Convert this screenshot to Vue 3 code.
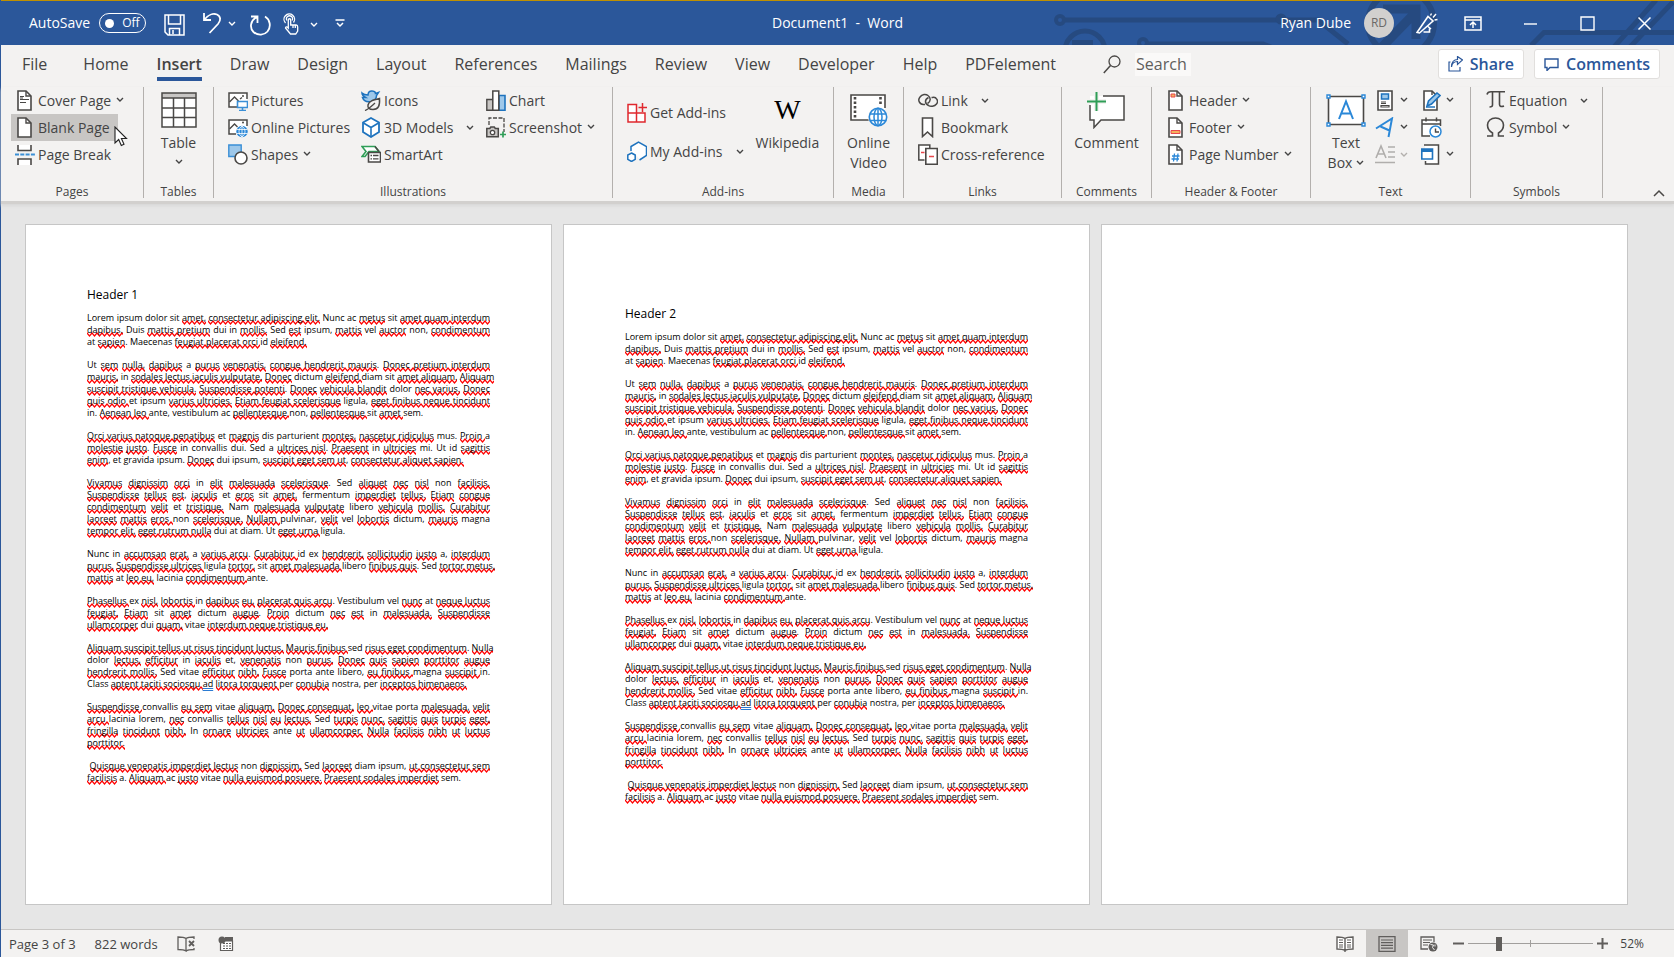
<script setup>
import { h, ref } from 'vue'

const G = '#4a4846'
const B = '#1e73be'

const icons = {
  chevron: [8, 5, '<path d="M1 1l3 3 3-3" fill="none" stroke="currentColor" stroke-width="1.4"/>'],
  cover: [20, 21, `<path d="M3 1h8l5 5v14H3z" fill="#fff" stroke="${G}" stroke-width="1.6"/><path d="M11 1v5h5" fill="none" stroke="${G}" stroke-width="1.4"/><path d="M5 6.500h4M5 9.500h9M5 12.500h6M5 8h3" stroke="${G}" stroke-width="1.2"/>`],
  blank: [20, 21, `<path d="M3 1h8l5 5v14H3z" fill="#fff" stroke="${G}" stroke-width="1.6"/><path d="M11 1v5h5" fill="none" stroke="${G}" stroke-width="1.4"/>`],
  pagebreak: [20, 21, `<path d="M3 1h13v5H3zM3 15h13v6H3z" fill="#fff"/><path d="M3 1v5.500h13V1M3 21v-6h13v6" fill="none" stroke="${G}" stroke-width="1.6"/><path d="M0 10.500h20" stroke="#3a8fd6" stroke-width="1.800" stroke-dasharray="4 1.300"/>`],
  table: [36, 36, `<path d="M1 1h34v34H1z" fill="#fff"/><path d="M1 1h34v5H1z" fill="#c8c6c4"/><path d="M1 1h34v34H1zM1 6h34M1 16h34M1 25.500h34M12.500 6v29M23.500 6v29" fill="none" stroke="${G}" stroke-width="1.500"/>`],
  pictures: [20, 21, `<path d="M1 3h18v14H1z" fill="#fff"/><path d="M9 17H1V3h18v6" fill="none" stroke="${G}" stroke-width="1.500"/><path d="M1.500 12l5-5 4 4M12 9l2-1.500" fill="none" stroke="${G}" stroke-width="1.400"/><circle cx="15" cy="6" r="1" fill="${G}"/><path d="M9.500 11.500h10v6h-10zM14.500 17.500v3M11 20.500h7" fill="#fff" stroke="#3a8fd6" stroke-width="1.600"/>`],
  online: [20, 21, `<path d="M1 3h18v14H1z" fill="#fff"/><path d="M8 17H1V3h18v6" fill="none" stroke="${G}" stroke-width="1.500"/><path d="M1.500 12l5-5 3 3" fill="none" stroke="${G}" stroke-width="1.400"/><circle cx="15" cy="5.500" r="1" fill="${G}"/><circle cx="14" cy="14.500" r="5.700" fill="#2b88d8"/><path d="M8.500 12.500h11M8.500 16.500h11M14 9v11M14 9c-4 3-4 8 0 11M14 9c4 3 4 8 0 11" fill="none" stroke="#fff" stroke-width=".8"/>`],
  shapes: [20, 21, `<path d="M.8 1h12.400v11.500H.8z" fill="#9ec8ea" stroke="#3a8fd6" stroke-width="1.400"/><circle cx="13" cy="14" r="6" fill="#fff" stroke="${G}" stroke-width="1.600"/>`],
  icons: [20, 21, `<path d="M1 3c2 2 4 2 6 2 0-3 2-4.500 4.500-4 2 .3 3 1.500 3 2.500l3-1-2 3c0 3-2 5-5 6-5 1-8-1-9-4l3 0C2 6 1 4.500 1 3z" fill="#9ec8ea" stroke="#1e73be" stroke-width="1.500"/><path d="M18.500 8.500c.5 7-1 11-6.500 11-4 0-5.500-2-5-4.500.8-4 5-5 11.500-6.500z" fill="#f3f2f1" stroke="${G}" stroke-width="1.500"/><path d="M4 20.500c3-1 6-4 10-7.500" fill="none" stroke="${G}" stroke-width="1.300"/>`],
  cube: [20, 21, '<path d="M10 1l8 4.500v9.500l-8 5-8-5V5.500z" fill="#fff" stroke="#1e73be" stroke-width="1.800"/><path d="M2.500 6l7.500 4.500L17.500 6M10 10.500V20" fill="none" stroke="#1e73be" stroke-width="1.600"/>'],
  smartart: [20, 21, `<path d="M1 2.500h13l4 5H8l-4 5H1l4-5z" fill="#fff" stroke="#2f9e57" stroke-width="1.600"/><path d="M14 2.500l4 5" stroke="${G}" stroke-width="1.400"/><path d="M7.500 8.500h12v9.500h-12z" fill="#fff" stroke="${G}" stroke-width="1.600"/><path d="M9.500 11.500h1.500M12 11.500h5.500M9.500 14.800h1.500M12 14.800h5.500" stroke="${G}" stroke-width="1.300"/>`],
  chart: [20, 21, `<path d="M.8 9.500h6v10.700h-6z" fill="#c8c6c4" stroke="${G}" stroke-width="1.400"/><path d="M13 5.500h6v14.700h-6z" fill="#9ec8ea" stroke="${B}" stroke-width="1.600"/><path d="M6.800 1h6v19.200h-6z" fill="#fff" stroke="${G}" stroke-width="1.500"/>`],
  screenshot: [20, 21, `<path d="M3 8V1h15v14" fill="none" stroke="${G}" stroke-width="1.300" stroke-dasharray="4 1.500"/><path d="M.8 11.500h3l1-1.500h3.500l1 1.500h3v8.200H.8z" fill="#c8c6c4" stroke="${G}" stroke-width="1.500"/><circle cx="6.500" cy="15.500" r="2.200" fill="#fff" stroke="${G}" stroke-width="1.300"/><path d="M17 14.500v6M14 17.500h6" stroke="#2f9e57" stroke-width="1.700"/>`],
  getaddins: [20, 21, '<path d="M1 2.500h8.500v8.500H1zM1 11h8.500v9H1zM9.500 11H18v9H9.500z" fill="#fff" stroke="#e0282e" stroke-width="1.500"/><path d="M15.500 1v9M11.500 5.500h8.500" stroke="#e0282e" stroke-width="1.500"/>'],
  myaddins: [20, 21, '<path d="M4 10V5.500L11.500 1l8 4.500v9l-6.500 4.500-3-4z" fill="#fff"/><path d="M4 10V5.500L11.500 1l8 4.500v9l-7 4.500" fill="none" stroke="#1e73be" stroke-width="1.500"/><path d="M4.500 12l3.700 2v4.300l-3.700 2.200L.8 18.300V14z" fill="#fff" stroke="#1e73be" stroke-width="1.500"/>'],
  video: [40, 34, `<path d="M2 2h34v25H2z" fill="#fff"/><path d="M21 27H2V2h34v13" fill="none" stroke="${G}" stroke-width="1.600"/><path d="M6 4v22M31.500 4v8" stroke="${G}" stroke-width="2.600" stroke-dasharray="2.500 2"/><circle cx="29" cy="24" r="10" fill="#f3f2f1"/><circle cx="29" cy="24" r="8.700" fill="#fff" stroke="#2b88d8" stroke-width="1.600"/><ellipse cx="29" cy="24" rx="4" ry="8.700" fill="none" stroke="#2b88d8" stroke-width="1.500"/><path d="M29 15v18M21 21h16M21 27.500h16" stroke="#2b88d8" stroke-width="1.500"/>`],
  link: [20, 21, `<path d="M7 14.500H5.500A4.500 4.500 0 0 1 2 7C4 4 8 4 10 5.500c3 2 3 6-.5 8" fill="none" stroke="${G}" stroke-width="1.500"/><path d="M13.500 7.500h1A4 4 0 0 1 18.500 14c-2 2.500-6 3-8 1.500-4-2-4-6 0-8" fill="none" stroke="${G}" stroke-width="1.500"/>`],
  bookmark: [20, 21, `<path d="M4.500 1h10v18.500l-5-4.500-5 4.500z" fill="#fff" stroke="${G}" stroke-width="1.600"/>`],
  crossref: [20, 21, `<path d="M.8 1h11v15H.8z" fill="#fff"/><path d="M6.500 16H.8V1h11v3" fill="none" stroke="${G}" stroke-width="1.500"/><path d="M7.800 4.500h11.500v15.700H7.800z" fill="#fff" stroke="${G}" stroke-width="1.600"/><path d="M3 8.500h3.500M11 12.500h5" stroke="#e8484d" stroke-width="1.500"/>`],
  comment: [40, 38, `<path d="M4 5h34v24H15l-7 8v-8H4z" fill="#fff"/><path d="M17 5h21v24H15l-7 7.500V29H4V14" fill="none" stroke="${G}" stroke-width="1.500"/><path d="M10.500 1v19M1 10.500h19" stroke="#f3f2f1" stroke-width="5"/><path d="M10.500 1v19M1 10.500h19" stroke="#2f9e57" stroke-width="2"/>`],
  header: [20, 21, `<path d="M3 1h8l5 5v14H3z" fill="#fff" stroke="${G}" stroke-width="1.600"/><path d="M11 1v5h5" fill="none" stroke="${G}" stroke-width="1.400"/><path d="M5 4h4v3H5z" fill="#f6b15c" stroke="#e8484d"/>`],
  footer: [20, 21, `<path d="M3 1h8l5 5v14H3z" fill="#fff" stroke="${G}" stroke-width="1.600"/><path d="M11 1v5h5" fill="none" stroke="${G}" stroke-width="1.400"/><path d="M5 13.500h9v3H5z" fill="#f6b15c" stroke="#e8484d"/>`],
  pagenum: [20, 21, `<path d="M3 1h8l5 5v14H3z" fill="#fff" stroke="${G}" stroke-width="1.600"/><path d="M11 1v5h5" fill="none" stroke="${G}" stroke-width="1.400"/><path d="M8.500 9.500l-1 8M12 9.500l-1 8M6 12h7.500M5.500 15h7.500" stroke="#2b88d8" stroke-width="1.300"/>`],
  textbox: [40, 34, `<path d="M2.500 3.500h35v28h-35z" fill="#fff" stroke="${G}" stroke-width="1.600"/><path d="M13 26l7-17.500L27 26M15.500 20.500h9" fill="none" stroke="#2b88d8" stroke-width="2"/><path d="M1 2h3v3H1zM36 2h3v3h-3zM1 30h3v3H1zM36 30h3v3h-3z" fill="#fff" stroke="#2b88d8" stroke-width="1.400"/>`],
  quickparts: [20, 21, `<path d="M3 1h14v19H3z" fill="#fff" stroke="${G}" stroke-width="1.600"/><path d="M6.500 4h7v5h-7z" fill="#9ec8ea" stroke="${B}" stroke-width="1.500"/><path d="M6 12h5M6 15.500h8v1.500H6zM6 13.500h5" stroke="${G}" stroke-width="1.200" fill="none"/>`],
  wordart: [20, 21, '<path d="M1 11.500L17 1.500L13.500 20M5.500 9.500l9 4" fill="none" stroke="#2b88d8" stroke-width="2"/>'],
  dropcap: [20, 21, '<path d="M1 14L6 2l5 12M2.800 10h6.400M13 3h7M13 8h7M13 13h7M0 18.500h20" fill="none" stroke="#b0aeac" stroke-width="1.600"/>'],
  signature: [20, 21, `<path d="M3 1h8l5 5v14H3z" fill="#fff" stroke="${G}" stroke-width="1.600"/><path d="M11 1v4" stroke="${G}" stroke-width="1.400"/><path d="M6 16l1.500-5L16 3l3 2.500-8.500 8.500z" fill="#9ec8ea" stroke="${B}" stroke-width="1.600"/><path d="M5 17h9" stroke="${B}" stroke-width="1.500"/>`],
  datetime: [21, 21, `<path d="M1 3h18v16H1z" fill="#fff"/><path d="M9 19H1V3h18.500v6M1 7h18.500M5 .5v4M15.500 .5v4" fill="none" stroke="${G}" stroke-width="1.500"/><circle cx="14.500" cy="14.500" r="5.500" fill="#fff" stroke="#2b88d8" stroke-width="1.500"/><path d="M14.500 11.500v3.500h3.500" fill="none" stroke="${G}" stroke-width="1.400"/>`],
  object: [20, 21, `<path d="M4 1h13v19H4z" fill="#fff"/><path d="M3 1h14.500v19H4.500v-3" fill="none" stroke="${G}" stroke-width="1.500"/><path d="M.8 5h10.700v10H.8z" fill="#fff" stroke="${B}" stroke-width="1.600"/><path d="M.8 6.500h10.700" stroke="${B}" stroke-width="3"/>`],
  pi: [20, 21, `<path d="M1 4.500C1.500 2 3 1.800 5 1.800h14M6.500 2v13c0 1.500-1 2-3 2M13.500 2v12.500c0 2 2 2.500 4.500 1.500" fill="none" stroke="${G}" stroke-width="1.600"/>`],
  omega: [20, 21, `<path d="M1 19h5.500v-3C3 14 1.500 11 1.500 8c0-4 3.500-7 8-7s8 3 8 7c0 3-1.500 6-5 8v3H18" fill="none" stroke="${G}" stroke-width="1.600"/>`],
  save: [21, 22, '<path d="M1 1h19v20H4l-3-3z" fill="none" stroke="#fff" stroke-width="1.500"/><path d="M4.500 1v9h12V1M5.500 21v-6.500h10V21M9 16v4" fill="none" stroke="#fff" stroke-width="1.500"/>'],
  undo: [20, 22, '<path d="M2 1v7h7M2.500 7.500C6 3 11 1 15 2.500c4 2 4 6 1 9.500l-8.500 9" fill="none" stroke="#fff" stroke-width="1.800"/>'],
  redo: [21, 22, '<path d="M1 2.500h6.500V9M7 3C0 6.500-.5 14 3.500 18c4.500 4 11 3 14-.5 4-5 2.500-12-2.500-15" fill="none" stroke="#fff" stroke-width="1.800"/>'],
  touch: [16, 22, '<path d="M2.500 10a5.300 5.300 0 1 1 8-.5M4 7.500a3 3 0 1 1 5 0" fill="none" stroke="#fff" stroke-width="1.300"/><path d="M5.300 15V7c0-1.700 2.400-1.700 2.400 0v5h5.500c1.500 0 1.500 1 1.500 2v4l-2 3H7.500l-5-6c0-1.500 1.500-1.500 2.800 0zM10 12v3M12.300 12v3" fill="none" stroke="#fff" stroke-width="1.300"/>'],
  customize: [10, 9, '<path d="M.5 1h9M2 4l3 3 3-3" fill="none" stroke="#fff" stroke-width="1.500"/>'],
  marker: [22, 21, '<path d="M1 19.500L12 3.500l5 4.500L3.500 20zM7.500 19h6v-3.500M12 13.500l3 2.500" fill="none" stroke="#fff" stroke-width="1.600"/><path d="M14.500 2.500l1-2M17 4.500l3-3.500M18.500 7l3-.5" stroke="#fff" stroke-width="1.400"/>'],
  ribbonmode: [18, 15, '<path d="M1 1h16v13H1zM1 4h16M9 12V6.500M6 9l3-3 3 3" fill="none" stroke="#fff" stroke-width="1.500"/>'],
  minimize: [15, 15, '<path d="M1 8h13" stroke="#fff" stroke-width="1.400"/>'],
  maximize: [15, 15, '<path d="M1 1h13v13H1z" fill="none" stroke="#fff" stroke-width="1.400"/>'],
  close: [15, 15, '<path d="M1.500 1.500l12 12M13.500 1.500l-12 12" stroke="#fff" stroke-width="1.500"/>'],
  search: [18, 19, `<circle cx="11.500" cy="6.500" r="5.500" fill="none" stroke="${G}" stroke-width="1.300"/><path d="M7.500 10.500L.8 18" stroke="${G}" stroke-width="1.500"/>`],
  share: [15, 16, '<path d="M2.500 6H1v9h11v-4M3.500 11c.5-4 3-5.500 6-5.500V8.500l5-4.500-5-3.500v3C6 3.500 3.500 6 3.500 11z" fill="none" stroke="#2b579a" stroke-width="1.200"/>'],
  bubble: [15, 13, '<path d="M1 1h13v8.500H6l-3 3v-3H1z" fill="none" stroke="#2b579a" stroke-width="1.400"/>'],
  collapse: [12, 8, `<path d="M1 7l5-5 5 5" fill="none" stroke="${G}" stroke-width="1.500"/>`],
  proof: [18, 16, '<path d="M9 2.500C7 1 4 1 1 1v12.500c3 0 6 0 8 1.500zM9 2.500C11 1 13 1 17 1v2M9 15c2-1.500 5-1.500 8-1.500V12" fill="none" stroke="#605e5c" stroke-width="1.300"/><path d="M12 5l5 5M17 5l-5 5" stroke="#605e5c" stroke-width="1.800"/>'],
  macro: [16, 16, '<path d="M2.500 5h12v9.500h-12z" fill="#fff" stroke="#605e5c" stroke-width="1.200"/><path d="M7 1h8v4H7z" fill="#605e5c"/><circle cx="4" cy="4" r="3.500" fill="#605e5c"/><path d="M5 7.500h9M5 10h9M5 12.500h9" stroke="#605e5c" stroke-width="1.200" stroke-dasharray="2 1"/>'],
  read: [18, 16, '<path d="M9 2.500C7 1 4 1 1 1v12c3 0 6 0 8 1.500C11 13 14 13 17 13V1c-3 0-6 0-8 1.500zM9 2v14" fill="#fff" stroke="#605e5c" stroke-width="1.400"/><path d="M3 4h4M3 6.500h4M3 9h4M11 4h4M11 6.500h4M11 9h4M3 11h4M11 11h4" stroke="#605e5c" stroke-width="1.200"/>'],
  print: [18, 16, '<path d="M1 .7h16v14.600H1z" fill="none" stroke="#605e5c" stroke-width="1.300"/><path d="M3 4h12M3 6.700h12M3 9.400h12M3 12.100h12" stroke="#605e5c" stroke-width="1.200"/>'],
  web: [18, 16, '<path d="M8 13H1V1h13v5" fill="none" stroke="#605e5c" stroke-width="1.300"/><path d="M3 4h9M3 6.500h7M3 9h5" stroke="#605e5c" stroke-width="1.200"/><circle cx="13" cy="11" r="4.500" fill="#605e5c"/><path d="M10.500 8.500l3 .5-1 2.500 2 2.500M15 8.500v2" fill="none" stroke="#f3f2f1" stroke-width="1"/>'],
  minus: [11, 11, '<path d="M0 5.500h11" stroke="#605e5c" stroke-width="2"/>'],
  plus: [11, 11, '<path d="M0 5.500h11M5.500 0v11" stroke="#605e5c" stroke-width="2"/>'],
  pointer: [14, 21, '<path d="M1 1v16l3.700-3.500L7.300 19.500l2.700-1.200-2.600-5.800h5.100z" fill="#fff" stroke="#222" stroke-width="1.100"/>']
}

const Icon = (props) => {
  const [w, ht, body] = icons[props.name]
  return h('svg', { width: w, height: ht, viewBox: `0 0 ${w} ${ht}`, 'aria-hidden': 'true', innerHTML: body })
}
Icon.props = ['name']

const tabs = ['File', 'Home', 'Insert', 'Draw', 'Design', 'Layout', 'References', 'Mailings', 'Review', 'View', 'Developer', 'Help', 'PDFelement']

const b = (icon, text, arrow = '') => ({ icon, text, arrow })
const illustrations = [
  [b('pictures', 'Pictures'), b('online', 'Online Pictures'), b('shapes', 'Shapes', 'near')],
  [b('icons', 'Icons'), b('cube', '3D Models', 'far'), b('smartart', 'SmartArt')],
  [b('chart', 'Chart'), b('screenshot', 'Screenshot', 'near')]
]
const addins = [b('getaddins', 'Get Add-ins'), b('myaddins', 'My Add-ins', 'far')]
const links = [b('link', 'Link', 'far'), b('bookmark', 'Bookmark'), b('crossref', 'Cross-reference')]
const headers = [b('header', 'Header', 'near'), b('footer', 'Footer', 'near'), b('pagenum', 'Page Number', 'near')]
const textA = [b('quickparts', 'Quick Parts', 'near'), b('wordart', 'WordArt', 'near'), b('dropcap', 'Drop Cap', 'off')]
const textB = [b('signature', 'Signature Line', 'near'), b('datetime', 'Date and Time'), b('object', 'Object', 'near')]
const symbols = [b('pi', 'Equation', 'far'), b('omega', 'Symbol', 'near')]

// [..] marks a spelling error, {..} a grammar hint; one string per printed line
const source = [
  ['Lorem ipsum dolor sit [amet,] [consectetur adipiscing elit.] Nunc ac [metus] sit [amet quam interdum]',
    '[dapibus.] Duis [mattis pretium] dui in [mollis.] Sed [est] ipsum, [mattis] vel [auctor] non, [condimentum]',
    'at [sapien]. Maecenas [feugiat placerat orci ]id [eleifend.]'],
  ['Ut [sem] [nulla,] [dapibus] a [purus] [venenatis,] [congue hendrerit mauris]. [Donec pretium interdum]',
    '[mauris,] in [sodales lectus iaculis vulputate.] [Donec] dictum [eleifend ]diam sit [amet aliquam.] [Aliquam]',
    '[suscipit tristique vehicula.] [Suspendisse potenti]. [Donec] [vehicula blandit] dolor [nec varius.] [Donec]',
    '[quis odio ]et ipsum [varius ultricies.] [Etiam feugiat scelerisque] ligula, [eget finibus neque tincidunt]',
    'in. [Aenean leo ]ante, vestibulum ac [pellentesque ]non, [pellentesque ]sit [amet ]sem.'],
  ['[Orci varius natoque penatibus] et [magnis] dis parturient [montes,] [nascetur ridiculus] mus. [Proin ]a',
    '[molestie] [justo]. [Fusce] in convallis dui. Sed a [ultrices nisl]. [Praesent] in [ultricies] mi. Ut id [sagittis]',
    '[enim], et gravida ipsum. [Donec] dui ipsum, [suscipit eget sem ut], [consectetur aliquet sapien.]'],
  ['[Vivamus] [dignissim] [orci] in [elit] [malesuada] [scelerisque]. Sed [aliquet] [nec] [nisl] non [facilisis.]',
    '[Suspendisse] [tellus] [est], [iaculis] et [eros] sit [amet,] fermentum [imperdiet] [tellus.] [Etiam] [congue]',
    '[condimentum] [velit] et [tristique.] Nam [malesuada] [vulputate] libero [vehicula] [mollis.] [Curabitur]',
    '[laoreet] [mattis] [eros ]non [scelerisque.] [Nullam ]pulvinar, [velit] vel [lobortis] dictum, [mauris] magna',
    '[tempor elit,] [eget rutrum nulla] dui at diam. Ut [eget urna ]ligula.'],
  ['Nunc in [accumsan] [erat,] a [varius arcu]. [Curabitur ]id ex [hendrerit,] [sollicitudin] [justo] a, [interdum]',
    '[purus.] [Suspendisse ultrices ]ligula [tortor,] sit [amet malesuada ]libero [finibus quis]. Sed [tortor metus,]',
    '[mattis] at [leo eu,] lacinia [condimentum ]ante.'],
  ['[Phasellus ]ex [nisl,] [lobortis ]in [dapibus] [eu,] [placerat quis arcu]. Vestibulum vel [nunc] at [neque luctus]',
    '[feugiat.] [Etiam] sit [amet] dictum [augue]. [Proin] dictum [nec] [est] in [malesuada.] [Suspendisse]',
    '[ullamcorper] dui [quam,] vitae [interdum neque tristique eu.]'],
  ['[Aliquam suscipit tellus ut risus tincidunt luctus.] [Mauris finibus ]sed [risus eget condimentum]. [Nulla]',
    'dolor [lectus,] [efficitur] in [iaculis] et, [venenatis] non [purus.] [Donec] [quis] [sapien] [porttitor] [augue]',
    '[hendrerit mollis.] Sed vitae [efficitur] [nibh.] [Fusce] porta ante libero, [eu finibus ]magna [suscipit ]in.',
    'Class [aptent taciti sociosqu ]{ad} [litora torquent ]per [conubia] nostra, per [inceptos himenaeos.]'],
  ['[Suspendisse ]convallis [eu sem] vitae [aliquam.] [Donec consequat,] [leo ]vitae porta [malesuada,] [velit]',
    '[arcu ]lacinia lorem, [nec] convallis [tellus] [nisl] [eu] [lectus.] Sed [turpis] [nunc,] [sagittis] [quis] [turpis] [eget,]',
    '[fringilla] [tincidunt] [nibh.] In [ornare] [ultricies] ante [ut] [ullamcorper.] [Nulla] [facilisis] [nibh] [ut] [luctus]',
    '[porttitor.]'],
  ['\u00a0[Quisque venenatis imperdiet lectus] non [dignissim.] Sed [laoreet] diam ipsum, [ut consectetur sem]',
    '[facilisis] a. [Aliquam ]ac [justo] vitae [nulla euismod posuere.] [Praesent sodales imperdiet] sem.']
]
const paragraphs = source.map((lines) =>
  lines.map((line) =>
    (line.match(/\[[^\]]*\]|\{[^}]*\}|[^[{]+/g) || []).map((s) => {
      if (s[0] === '[') return { text: s.slice(1, -1), mark: 'spell' }
      if (s[0] === '{') return { text: s.slice(1, -1), mark: 'grammar' }
      return { text: s, mark: '' }
    })
  )
)

const sheets = [
  { title: 'Header 1', cls: 'first' },
  { title: 'Header 2', cls: 'second' },
  { title: '', cls: '' }
]
const zoom = ref(23)
</script>

<template>
  <div class="word">
    <header class="titlebar">
      <svg class="circuit" width="624" height="44" viewBox="1050 1 624 44" aria-hidden="true">
        <g fill="none" stroke="#264a80" stroke-width="5">
          <circle cx="1060" cy="20" r="4" stroke-width="4" />
          <path d="M1065 20h212M1282 20h36l30 24" />
          <circle cx="1281" cy="19" r="3" />
          <circle cx="1085" cy="51" r="20" />
          <path d="M1072 42.500h21" />
          <circle cx="1143" cy="43" r="4" stroke-width="4" />
          <path d="M1148 44h115l8 3" />
          <circle cx="1401" cy="23" r="33" stroke-width="6" />
          <path d="M1382 47l32-33M1383 9h33v30" stroke-width="9" />
          <path d="M1674 32.500h-130l-13 13M1614 47l42-47M1630 47l43-45" />
        </g>
      </svg>
      <div class="quick">
        <span class="autosave">AutoSave</span>
        <button class="toggle" aria-label="AutoSave off"><i class="knob"></i>Off</button>
        <button class="tb save" aria-label="Save"><Icon name="save" /></button>
        <button class="tb" aria-label="Undo"><Icon name="undo" /><Icon name="chevron" /></button>
        <button class="tb redo" aria-label="Redo"><Icon name="redo" /></button>
        <button class="tb touch" aria-label="Touch mode"><Icon name="touch" /><Icon name="chevron" /></button>
        <button class="tb custom" aria-label="Customize toolbar"><Icon name="customize" /></button>
      </div>
      <div class="doc">Document1&nbsp; -&nbsp; Word</div>
      <div class="window">
        <span class="user">Ryan Dube</span>
        <span class="avatar">RD</span>
        <button class="tb marker" aria-label="What's new"><Icon name="marker" /></button>
        <button class="tb mode" aria-label="Ribbon display"><Icon name="ribbonmode" /></button>
        <button class="tb ctl" aria-label="Minimize"><Icon name="minimize" /></button>
        <button class="tb ctl" aria-label="Maximize"><Icon name="maximize" /></button>
        <button class="tb" aria-label="Close"><Icon name="close" /></button>
      </div>
    </header>

    <nav class="tabs">
      <button v-for="t in tabs" :key="t" class="tab" :class="{ active: t === 'Insert', file: t === 'File' }">{{ t }}</button>
      <label class="search"><Icon name="search" /><input type="text" placeholder="Search" aria-label="Search" /></label>
      <div class="actions">
        <button class="action"><Icon name="share" />Share</button>
        <button class="action"><Icon name="bubble" />Comments</button>
      </div>
    </nav>

    <section class="ribbon">
      <div class="group pages">
        <div class="body">
          <div class="col">
            <button class="cmd"><Icon name="cover" /><span>Cover Page</span><Icon name="chevron" class="near" /></button>
            <button class="cmd hover"><Icon name="blank" /><span>Blank Page</span><Icon name="pointer" class="pointer" /></button>
            <button class="cmd"><Icon name="pagebreak" /><span>Page Break</span></button>
          </div>
        </div>
        <div class="label">Pages</div>
      </div>
      <div class="group tables">
        <div class="body mid">
          <button class="big"><span class="pic"><Icon name="table" /></span><span>Table</span><Icon name="chevron" class="below" /></button>
        </div>
        <div class="label">Tables</div>
      </div>
      <div class="group illus">
        <div class="body">
          <div v-for="(c, i) in illustrations" :key="i" class="col">
            <button v-for="x in c" :key="x.text" class="cmd"><Icon :name="x.icon" /><span>{{ x.text }}</span><Icon v-if="x.arrow" name="chevron" :class="x.arrow" /></button>
          </div>
        </div>
        <div class="label">Illustrations</div>
      </div>
      <div class="group addins">
        <div class="body">
          <div class="col spread">
            <button v-for="x in addins" :key="x.text" class="cmd"><Icon :name="x.icon" /><span>{{ x.text }}</span><Icon v-if="x.arrow" name="chevron" :class="x.arrow" /></button>
          </div>
          <button class="big"><span class="pic wiki">W</span><span>Wikipedia</span></button>
        </div>
        <div class="label">Add-ins</div>
      </div>
      <div class="group media">
        <div class="body mid">
          <button class="big"><span class="pic"><Icon name="video" /></span><span>Online</span><span>Video</span></button>
        </div>
        <div class="label">Media</div>
      </div>
      <div class="group links">
        <div class="body">
          <div class="col">
            <button v-for="x in links" :key="x.text" class="cmd"><Icon :name="x.icon" /><span>{{ x.text }}</span><Icon v-if="x.arrow" name="chevron" :class="x.arrow" /></button>
          </div>
        </div>
        <div class="label">Links</div>
      </div>
      <div class="group notes">
        <div class="body mid">
          <button class="big"><span class="pic"><Icon name="comment" /></span><span>Comment</span></button>
        </div>
        <div class="label">Comments</div>
      </div>
      <div class="group heads">
        <div class="body">
          <div class="col">
            <button v-for="x in headers" :key="x.text" class="cmd"><Icon :name="x.icon" /><span>{{ x.text }}</span><Icon v-if="x.arrow" name="chevron" :class="x.arrow" /></button>
          </div>
        </div>
        <div class="label">Header &amp; Footer</div>
      </div>
      <div class="group texts">
        <div class="body">
          <button class="big"><span class="pic"><Icon name="textbox" /></span><span>Text</span><span class="inline">Box<Icon name="chevron" class="near" /></span></button>
          <div class="col">
            <button v-for="x in textA" :key="x.text" class="cmd" :aria-label="x.text"><Icon :name="x.icon" /><Icon name="chevron" :class="x.arrow" /></button>
          </div>
          <div class="col">
            <button v-for="x in textB" :key="x.text" class="cmd" :aria-label="x.text"><Icon :name="x.icon" /><Icon v-if="x.arrow" name="chevron" class="near" /></button>
          </div>
        </div>
        <div class="label">Text</div>
      </div>
      <div class="group symbols">
        <div class="body">
          <div class="col">
            <button v-for="x in symbols" :key="x.text" class="cmd"><Icon :name="x.icon" /><span>{{ x.text }}</span><Icon v-if="x.arrow" name="chevron" :class="x.arrow" /></button>
          </div>
        </div>
        <div class="label">Symbols</div>
      </div>
      <button class="collapse" aria-label="Collapse the ribbon"><Icon name="collapse" /></button>
    </section>

    <main class="desk">
      <article v-for="(s, i) in sheets" :key="i" class="sheet" :class="s.cls">
        <template v-if="s.title">
          <h2>{{ s.title }}</h2>
          <p v-for="(p, j) in paragraphs" :key="j">
            <span v-for="(l, k) in p" :key="k" class="line" :class="{ last: k === p.length - 1 }"><span v-for="(r, n) in l" :key="n" :class="r.mark">{{ r.text }}</span></span>
          </p>
        </template>
      </article>
    </main>

    <footer class="status">
      <span class="count">Page 3 of 3</span>
      <span class="count">822 words</span>
      <button class="st proof" aria-label="Proofing"><Icon name="proof" /></button>
      <button class="st" aria-label="Macro recording"><Icon name="macro" /></button>
      <div class="views">
        <button class="view" aria-label="Read mode"><Icon name="read" /></button>
        <button class="view on" aria-label="Print layout"><Icon name="print" /></button>
        <button class="view" aria-label="Web layout"><Icon name="web" /></button>
      </div>
      <button class="st" aria-label="Zoom out"><Icon name="minus" /></button>
      <input v-model="zoom" class="slider" type="range" min="0" max="100" aria-label="Zoom" />
      <button class="st" aria-label="Zoom in"><Icon name="plus" /></button>
      <span class="percent">52%</span>
    </footer>
  </div>
</template>

<style>
body {
  background: #e6e6e6;
}
</style>

<style scoped>
.word {
  box-sizing: border-box;
  display: flex;
  flex-direction: column;
  min-height: 100vh;
  border-left: 1px solid #2b579a;
  background: #e6e6e6;
  color: #444;
  font: 14px/20px "Open Sans", "Noto Sans", sans-serif;
}
button {
  display: flex;
  align-items: center;
  padding: 0;
  border: 0;
  background: none;
  color: inherit;
  font: inherit;
  white-space: nowrap;
}
svg {
  flex: none;
  display: block;
}

.titlebar {
  position: relative;
  display: grid;
  grid-template-columns: 1fr auto 1fr;
  align-items: center;
  height: 44px;
  border-top: 1px solid #bf9000;
  background: #2b579a;
  color: #fff;
}
.circuit {
  position: absolute;
  right: 0;
  top: 0;
}
.quick,
.window {
  position: relative;
  display: flex;
  align-items: center;
}
.quick {
  padding-left: 28px;
}
.toggle {
  box-sizing: border-box;
  gap: 8px;
  width: 47px;
  height: 20px;
  margin-left: 9px;
  padding-left: 5px;
  border: 1px solid #fff;
  border-radius: 10px;
  font-size: 12px;
}
.knob {
  width: 9px;
  height: 9px;
  border-radius: 5px;
  background: #fff;
}
.tb {
  gap: 6px;
}
.save {
  margin: 4px 17px 0 18px;
}
.redo {
  margin: 4px 0 0 14px;
}
.touch {
  gap: 11px;
  margin: 2px 17px 0 12px;
}
.window {
  justify-content: flex-end;
  padding-right: 22px;
}
.avatar {
  width: 30px;
  height: 30px;
  margin: 0 22px 0 13px;
  border-radius: 15px;
  background: #d2d0ce;
  color: #6b6967;
  font-size: 12px;
  line-height: 30px;
  text-align: center;
}
.marker {
  margin-right: 26px;
}
.mode {
  margin-right: 41px;
}
.ctl {
  margin-right: 42px;
}

.tabs {
  display: flex;
  align-items: center;
  gap: 28px;
  height: 42px;
  padding: 0 14px 0 21px;
  background: #f3f2f1;
  font-size: 16px;
}
.tab {
  box-sizing: border-box;
  height: 30px;
  border-bottom: 4px solid transparent;
}
.file {
  margin-right: 8px;
}
.active {
  border-bottom-color: #2b579a;
  font-weight: 600;
}
.search {
  display: flex;
  align-items: center;
  gap: 14px;
  margin: 0 auto 4px 19px;
}
.search input {
  box-sizing: border-box;
  width: 56px;
  height: 23px;
  padding: 0 1px;
  border: 0;
  background: #faf9f8;
  font: inherit;
}
.search input::placeholder {
  color: #605e5c;
  opacity: 1;
}
.actions {
  display: flex;
  gap: 10px;
}
.action {
  gap: 7px;
  height: 30px;
  margin-bottom: 4px;
  padding: 0 9px;
  border: 1px solid #e1dfdd;
  border-radius: 3px;
  background: #fff;
  color: #2b579a;
  font-weight: 600;
}

.ribbon {
  position: relative;
  display: flex;
  height: 114px;
  background: #f3f2f1;
  border-bottom: 3px solid #d2d0ce;
  box-shadow: 0 2px 3px #d8d8d8;
}
.group {
  box-sizing: border-box;
  display: flex;
  flex-direction: column;
  justify-content: space-between;
  height: 111px;
  border-right: 1px solid #b3b0ad;
}
.body {
  display: flex;
}
.mid {
  justify-content: center;
}
.label {
  font-size: 12px;
  line-height: 12px;
  text-align: center;
}
.cmd {
  position: relative;
  gap: 3px;
  height: 27px;
}
.near {
  margin: 0 0 2px 2px;
}
.far {
  margin-left: 10px;
}
.off {
  margin-left: 2px;
  color: #b3b0ad;
}
.hover {
  background: #c8c6c4;
}
.pointer {
  position: absolute;
  left: 103px;
  top: 12px;
}
.big {
  flex-direction: column;
}
.pic {
  display: flex;
  align-items: center;
  height: 46px;
}
.wiki {
  color: #000;
  font: 28px "Liberation Serif", serif;
}
.below {
  margin-top: 6px;
}
.inline {
  display: flex;
  align-items: center;
  gap: 2px;
}
.pages {
  width: 143px;
  padding-left: 10px;
}
.pages .label {
  margin-left: -10px;
}
.pages .col {
  width: 107px;
}
.pages .cmd {
  width: 100%;
  padding-left: 4px;
}
.tables,
.media {
  width: 70px;
}
.illus {
  width: 399px;
}
.illus .body {
  padding-left: 14px;
}
.illus .col:nth-child(1) {
  width: 133px;
}
.illus .col:nth-child(2) {
  width: 125px;
}
.addins {
  width: 221px;
}
.addins .body {
  padding-left: 14px;
  gap: 12px;
}
.spread {
  display: flex;
  flex-direction: column;
  gap: 12px;
  padding-top: 12px;
}
.links {
  width: 158px;
}
.links .body {
  padding-left: 14px;
}
.notes {
  width: 90px;
}
.heads {
  width: 159px;
}
.heads .body {
  padding-left: 14px;
}
.texts {
  width: 160px;
}
.texts .body {
  padding-left: 15px;
  gap: 9px;
}
.texts .col + .col {
  margin-left: 4px;
}
.symbols {
  width: 132px;
}
.symbols .body {
  padding-left: 15px;
}
.collapse {
  margin: auto 9px 4px auto;
}

.desk {
  display: flex;
  flex: 1;
  align-items: flex-start;
  gap: 11px;
  padding: 20px 46px 22px 24px;
}
.sheet {
  box-sizing: border-box;
  flex: 1;
  min-width: 0;
  aspect-ratio: 527 / 681;
  padding: 0 61px;
  border: 1px solid #c6c6c6;
  background: #fff;
  color: #000;
}
.first {
  padding-top: 60px;
}
.second {
  padding-top: 79px;
}
h2 {
  margin: 0 0 8px;
  font-size: 12px;
  font-weight: 400;
  line-height: 19px;
}
p {
  margin: 0 0 11px;
  font-size: 9px;
  line-height: 12px;
}
.line {
  display: block;
  width: max-content;
  min-width: 100%;
  text-align: justify;
  text-align-last: justify;
}
.last {
  text-align-last: left;
}
.spell {
  padding-bottom: 1px;
  background: url("data:image/svg+xml,%3Csvg xmlns='http://www.w3.org/2000/svg' width='5' height='5'%3E%3Cpath d='M-1 -.2L2.5 4L6 -.2' fill='none' stroke='red' stroke-width='1.2'/%3E%3C/svg%3E") left bottom repeat-x;
}
.grammar {
  text-decoration: underline double #2b7cd3 1px;
  text-decoration-skip-ink: none;
}

.status {
  display: flex;
  align-items: center;
  height: 27px;
  padding: 0 30px 0 8px;
  border-top: 1px solid #c8c6c4;
  background: #f3f2f1;
  font-size: 12px;
}
.count {
  margin-right: 19px;
  font-size: 13px;
}
.proof {
  margin-right: 23px;
}
.views {
  display: flex;
  margin: 0 3px 0 auto;
}
.view {
  justify-content: center;
  width: 42px;
  height: 27px;
}
.on {
  background: #c8c6c4;
}
.slider {
  width: 125px;
  height: 14px;
  margin: 0 4px;
  appearance: none;
  background:
    linear-gradient(#a19f9d, #a19f9d) center / 100% 1px no-repeat,
    linear-gradient(#a19f9d, #a19f9d) center / 1px 7px no-repeat;
}
.slider::-webkit-slider-thumb {
  appearance: none;
  width: 6px;
  height: 14px;
  background: #605e5c;
}
.percent {
  margin-left: 12px;
}
</style>
